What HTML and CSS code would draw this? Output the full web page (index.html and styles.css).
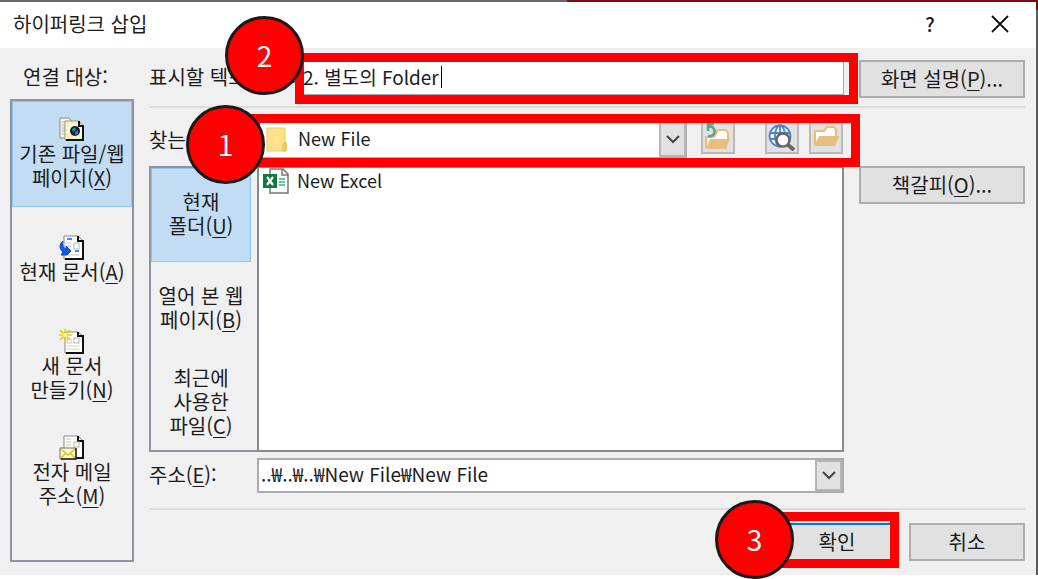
FILE: index.html
```
<!DOCTYPE html>
<html lang="ko">
<head>
<meta charset="utf-8">
<title>하이퍼링크 삽입</title>
<link rel="stylesheet" href="styles.css">
</head>
<body>
<div class="backdrop">
<main class="dialog">
  <header class="titlebar">
    <h1 class="title">하이퍼링크 삽입</h1>
    <button class="title-button help" type="button">?</button>
    <button class="title-button" type="button" aria-label="닫기">
      <svg width="18" height="18" viewBox="0 0 18 18"><path d="M1 1L17 17M17 1L1 17" stroke="#111" stroke-width="1.8" fill="none"/></svg>
    </button>
  </header>
  <div class="body">
    <nav class="sidebar">
      <div class="sidebar-label">연결 대상:</div>
      <div class="targets">
        <button class="target selected" type="button">
          <svg width="26" height="25" viewBox="0 0 26 25">
            <path d="M1 1H10L12 3V21H1Z" fill="#f6f3e6" stroke="#8c8c84"/>
            <path d="M3 5H6M3 8H6M3 11H6M3 14H6M3 17H6" stroke="#aaa"/>
            <path d="M6 4H20L24 9V23H6Z" fill="#fffbe0" stroke="#9a9470"/>
            <path d="M8 6H18M8 9H11M8 19H21M8 21H21M8 12V18" stroke="#f3d850" stroke-dasharray="2 2"/>
            <path d="M20 4V9H24V23H7" fill="none" stroke="#111" stroke-width="2"/>
            <circle cx="16" cy="14" r="5" fill="#101c34"/>
            <path d="M13 12L16 10L17 13L14 15Z" fill="#16a05c"/><path d="M16 15L19 13L19 17L16 18Z" fill="#2878dc"/>
          </svg>
          <span>기존 파일/웹<br>페이지(<u>X</u>)</span>
        </button>
        <button class="target" type="button">
          <svg width="26" height="25" viewBox="0 0 26 25">
            <path d="M5 1H19L24 6V24H5Z" fill="#fff" stroke="#888"/>
            <path d="M19 1V6H24V24H6" fill="none" stroke="#111" stroke-width="2"/>
            <path d="M8 4H13M16 16H20" stroke="#3b8cff" stroke-width="2"/>
            <path d="M8 8H12M8 11H12M8 20H20" stroke="#c8c3b5"/>
            <rect x="15" y="8" width="5" height="6" fill="#fff" stroke="#b9b5aa"/>
            <path d="M4 6C0 9 0 14 4 17L2 20H8L12 16L7 11V14C4 13 3 10 4 6Z" fill="#1459d9" stroke="#0b49be"/>
          </svg>
          <span>현재 문서(<u>A</u>)</span>
        </button>
        <button class="target" type="button">
          <svg width="26" height="25" viewBox="0 0 26 25">
            <path d="M6 3H19L24 7V24H6Z" fill="#fffefa" stroke="#888"/>
            <path d="M19 3V7H24V24H7" fill="none" stroke="#111" stroke-width="2"/>
            <path d="M8 17H20M8 20H20" stroke="#d6d0be"/>
            <rect x="8" y="10" width="4" height="4" fill="#fff" stroke="#c8c3b5"/><rect x="15" y="9" width="5" height="5" fill="#fff" stroke="#b9b5aa"/>
            <path d="M6 0V13M0 6H13M1 1L11 11M11 1L1 11" stroke="#e8c60c" stroke-width="1.5"/>
            <circle cx="6" cy="6" r="2" fill="#fff8c8"/>
          </svg>
          <span>새 문서<br>만들기(<u>N</u>)</span>
        </button>
        <button class="target" type="button">
          <svg width="26" height="25" viewBox="0 0 26 25">
            <path d="M5 1H19L24 6V23H5Z" fill="#fff" stroke="#888"/>
            <path d="M19 1V6H24V23H17" fill="none" stroke="#111" stroke-width="2"/>
            <path d="M7 4H12M7 7H12M7 10H12" stroke="#c8c3b5"/>
            <rect x="15" y="7" width="5" height="5" fill="#fff" stroke="#b9b5aa"/>
            <path d="M1 13H17V24H1Z" fill="#fffbd0" stroke="#77735e"/>
            <path d="M2 14L9 20L16 14M2 23L7 18M16 23L11 18" fill="none" stroke="#e3bd25" stroke-width="1.5"/>
            <path d="M17 13V24H2" fill="none" stroke="#222" stroke-width="1.5"/>
          </svg>
          <span>전자 메일<br>주소(<u>M</u>)</span>
        </button>
      </div>
    </nav>
    <div class="content">
      <div class="row">
        <label class="label wide" for="display-text">표시할 텍스트(<u>T</u>):</label>
        <div class="field">
          <input class="text-input" id="display-text" type="text" value="2. 별도의 Folder">
          <span class="caret"></span>
          <div class="frame frame-text"><span class="badge badge-text">2</span></div>
        </div>
      </div>
      <button class="button" type="button">화면 설명(<u>P</u>)...</button>

      <hr class="rule">

      <div class="row lookup">
        <label class="label" for="folder">찾는 위치(<u>L</u>):</label>
        <div class="field lookup-field">
          <div class="combo">
            <svg class="folder-icon" width="21" height="25" viewBox="0 0 21 25"><path d="M1 1H19V15L20 16V24H1Z" fill="#ffe28a" stroke="#eccb62"/><path d="M17 24V17L20 15V24Z" fill="#f7d264" stroke="#dfb848"/></svg>
            <select class="combo-select" id="folder"><option>New File</option></select>
            <span class="combo-arrow"><svg width="14" height="9" viewBox="0 0 14 9"><path d="M1 1L7 7L13 1" fill="none" stroke="#444" stroke-width="2"/></svg></span>
          </div>
          <div class="tools">
            <button class="tool" type="button" aria-label="상위 폴더">
              <svg width="26" height="28" viewBox="0 0 26 28"><path d="M1 25V14H9L13 7H21L23 10V16" fill="#fff" stroke="#e9bd7a" stroke-width="2"/><path d="M5 16H25L21 26H1Z" fill="#e9bf80"/><path d="M3 13C8 14 11 10 9 6C8 4 6 3 4 4M9 1H3V8" fill="none" stroke="#56a68a" stroke-width="2.5"/></svg>
            </button>
            <button class="tool web" type="button" aria-label="웹 찾아보기">
              <svg width="28" height="28" viewBox="0 0 28 28"><g fill="#f4f8fc" stroke="#4a86c4" stroke-width="1.8"><circle cx="12" cy="13" r="10.5"/><ellipse cx="12" cy="13" rx="5" ry="10.5"/><path d="M2 10H22M2 16H12M12 2V12"/></g><path d="M19 21L26 27" stroke="#666" stroke-width="4"/><circle cx="15" cy="17" r="6.5" fill="#fff" stroke="#666" stroke-width="2.5"/></svg>
            </button>
            <button class="tool" type="button" aria-label="파일 찾아보기">
              <svg width="26" height="28" viewBox="0 0 26 28"><path d="M2 22V8H11L14 4H21L23 7V13" fill="#fff" stroke="#e9bd7a" stroke-width="2"/><path d="M6 13H26L22 23H1Z" fill="#e9bf80"/></svg>
            </button>
          </div>
          <div class="frame frame-lookup"><span class="badge badge-lookup">1</span></div>
        </div>
      </div>

      <div class="browser">
        <div class="tabs">
          <button class="tab selected" type="button">현재<br>폴더(<u>U</u>)</button>
          <button class="tab" type="button">열어 본 웹<br>페이지(<u>B</u>)</button>
          <button class="tab" type="button">최근에<br>사용한<br>파일(<u>C</u>)</button>
        </div>
        <ul class="files">
          <li class="file">
            <svg width="26" height="26" viewBox="0 0 26 26"><path d="M7 1H20L25 6V25H7Z" fill="#fff" stroke="#777" stroke-width="1.5"/><path d="M19 1V7H25" fill="none" stroke="#777" stroke-width="1.5"/><path d="M16 11H22M16 14H22M16 17H22" stroke="#35b783" stroke-width="1.5"/><rect x="0" y="6" width="14" height="14" fill="#0e7a41"/><path d="M4 9L10 17M10 9L4 17" stroke="#fff" stroke-width="2.2"/></svg>
            <span>New Excel</span>
          </li>
        </ul>
      </div>
      <button class="button" type="button">책갈피(<u>O</u>)...</button>

      <div class="row address">
        <label class="label" for="address">주소(<u>E</u>):</label>
        <div class="combo">
          <input class="combo-input" id="address" type="text" value="..₩..₩..₩New File₩New File">
          <span class="combo-arrow"><svg width="14" height="9" viewBox="0 0 14 9"><path d="M1 1L7 7L13 1" fill="none" stroke="#444" stroke-width="2"/></svg></span>
        </div>
      </div>

      <hr class="rule">

      <div class="actions">
        <div class="confirm">
          <button class="button primary" type="button">확인</button>
          <div class="frame frame-confirm"><span class="badge badge-confirm">3</span></div>
        </div>
        <button class="button cancel" type="button">취소</button>
      </div>
    </div>
  </div>
</main>
</div>
</body>
</html>
```
FILE: styles.css
```
* {
  box-sizing: border-box;
}

body {
  min-height: 100vh;
  margin: 0;
  padding-bottom: 4px;
  background: #fff;
  color: #1c1c1c;
  font: 20px/24px "Noto Sans CJK KR", sans-serif;
}

button,
input,
select {
  margin: 0;
  color: inherit;
  font: inherit;
}

u {
  text-decoration-thickness: 1px;
  text-underline-offset: 3px;
}

.backdrop {
  padding: 2px 2px 0 0;
  background:
    linear-gradient(90deg, #666 0 567px, #7b0c14 567px) top / 100% 10px no-repeat,
    #5c5c5c;
}

.dialog {
  background: #f0f0f0;
}

.titlebar {
  display: flex;
  align-items: center;
  height: 46px;
  padding: 0 21px 2px 13px;
  background: #fff;
}

.title {
  flex: 1;
  margin: 0;
  font-size: 20px;
  font-weight: 400;
}

.title-button {
  display: flex;
  align-items: center;
  justify-content: center;
  width: 30px;
  height: 30px;
  padding: 0;
  border: 0;
  background: none;
}

.help {
  margin-right: 40px;
  font-weight: 500;
}

.body {
  display: grid;
  grid-template-columns: 124px 1fr;
  gap: 15px;
  padding: 0 11px 13px 10px;
}

.sidebar {
  display: flex;
  flex-direction: column;
}

.sidebar-label {
  padding: 17px 13px 10px;
}

.targets {
  flex: 1;
  border: 2px solid #8f949e;
}

.target {
  display: flex;
  flex-direction: column;
  align-items: center;
  justify-content: center;
  width: 100%;
  height: 106px;
  padding: 0 0 2px;
  border: 0;
  background: none;
  white-space: nowrap;
}

.selected.target,
.selected.tab {
  border: 1px solid #8ec5f3;
  background: #c1dcf3;
}

.content {
  display: grid;
  grid-template-columns: 1fr 166px;
  column-gap: 15px;
  align-content: start;
  align-items: start;
  padding-top: 12px;
}

.row,
.browser {
  grid-column: 1;
}

.row {
  display: flex;
  align-items: flex-start;
}

.label {
  flex: none;
  width: 108px;
  padding-top: 5px;
  white-space: nowrap;
}

.label.wide {
  width: 148px;
}

.field {
  position: relative;
  flex: 1;
  display: flex;
}

.text-input {
  flex: 1;
  min-width: 0;
  height: 35px;
  padding: 0 5px 2px;
  border: 1px solid #a5a8b0;
  background: #fff;
  font-size: 19px;
}

.caret {
  position: absolute;
  top: 6px;
  left: 144px;
  width: 1px;
  height: 22px;
  background: #000;
}

.button {
  height: 38px;
  padding: 0;
  border: 2px solid #adadad;
  background: #e1e1e1;
}

.rule {
  grid-column: 1 / -1;
  width: 100%;
  height: 2px;
  margin: 8px 0 12px;
  border: 0;
  background: #dcdcdc;
}

.lookup {
  margin-bottom: 8px;
}

.lookup-field {
  justify-content: space-between;
  padding-right: 1px;
}

.combo {
  flex: 1;
  display: flex;
  align-items: stretch;
  height: 35px;
  border: 2px solid #acadb3;
  background: #fff;
}

.lookup .combo {
  height: 38px;
  border-width: 1px;
}

.lookup .label {
  padding-top: 8px;
}

.folder-icon {
  align-self: center;
  margin-left: 8px;
}

.combo-select,
.combo-input {
  appearance: none;
  flex: 1;
  min-width: 0;
  border: 0;
  background: none;
}

.combo-select {
  padding: 0 0 2px 11px;
  font-size: 18px;
}

.combo-input {
  padding: 0 0 4px 2px;
  font-size: 19px;
}

.combo-arrow {
  display: flex;
  align-items: center;
  justify-content: center;
  width: 27px;
  border: 2px solid #b5b5b5;
  background: #e1e1e1;
}

.tools {
  display: flex;
  gap: 10px;
  margin-left: 14px;
}

.tool {
  display: flex;
  align-items: center;
  justify-content: center;
  width: 34px;
  height: 34px;
  padding: 0;
  border: 2px solid #b9b9b9;
  background: #e1e1e1;
}

.web {
  margin-left: 20px;
}

.browser {
  display: grid;
  grid-template-columns: 108px 1fr;
}

.tabs {
  display: flex;
  flex-direction: column;
  padding-right: 6px;
  border: 2px solid #8f949e;
  border-right: 0;
}

.tab {
  height: 94px;
  padding: 0 0 2px;
  border: 0;
  background: none;
  white-space: nowrap;
}

.files {
  margin: 0;
  padding: 0 4px;
  border: 2px solid #858994;
  background: #fff;
  list-style: none;
}

.file {
  display: flex;
  align-items: center;
  gap: 8px;
  font-size: 18px;
}

.file span {
  padding-bottom: 2px;
}

.address {
  margin-top: 6px;
}

.address + .rule {
  margin: 15px 0 13px;
}

.actions {
  grid-column: 1 / -1;
  display: flex;
  justify-content: flex-end;
  gap: 14px;
  padding-bottom: 1px;
}

.confirm {
  position: relative;
}

.primary,
.cancel {
  width: 116px;
}

.primary {
  border-color: #0078d7;
}

.frame {
  position: absolute;
  border: 9px solid #f00;
  pointer-events: none;
}

.frame-text {
  inset: -7px -14px -9px -2px;
}

.frame-lookup {
  inset: -6px -16px -9px -6px;
}

.frame-confirm {
  inset: -11px -4px -7px 0;
}

.badge {
  position: absolute;
  display: flex;
  align-items: center;
  justify-content: center;
  width: 79px;
  height: 79px;
  padding-bottom: 2px;
  border: 3px solid #1a1a1a;
  border-radius: 50%;
  background: #f00;
  color: #fff;
  font-size: 28px;
  line-height: 32px;
}

.badge-text {
  top: -46px;
  left: -79px;
}

.badge-lookup {
  top: -18px;
  left: -74px;
}

.badge-confirm {
  top: -21px;
  left: -73px;
}
```
